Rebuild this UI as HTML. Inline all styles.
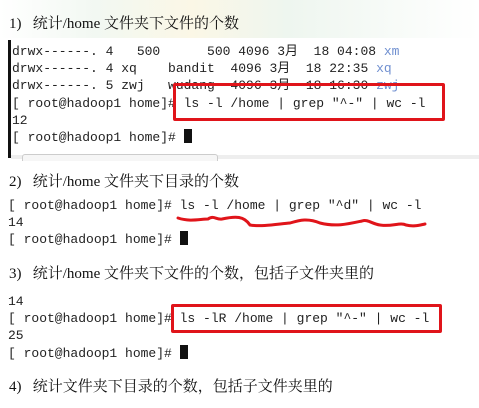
<!DOCTYPE html><html><head><style>
body{margin:0;width:479px;height:408px;background:#fff;position:relative;overflow:hidden}
.h{position:absolute;left:9px;font-family:"Liberation Serif","Noto Serif CJK SC",serif;font-size:15px;color:#111;white-space:pre}
.t{position:absolute;font-family:"Liberation Mono","Noto Sans CJK SC",monospace;font-size:13px;color:#222;white-space:pre;line-height:17.2px}
.c{display:inline-block;width:8px;height:14px;background:#111;vertical-align:-2px}
.b{color:#6f8fd0}
.box{position:absolute;border:3px solid #e0141a;border-radius:2px}
</style></head><body>
<div style="position:absolute;left:0;top:0;width:479px;height:38px;background:linear-gradient(90deg,#fff 0,#f2f8f2 20%,#fbf7e6 40%,#eef6ef 60%,#fff 100%)"></div>
<div class="h" style="top:12px">1)   统计/home 文件夹下文件的个数</div>
<div style="position:absolute;left:8px;top:40px;width:3px;height:118px;background:#111"></div>
<div style="position:absolute;left:11px;top:155px;width:468px;height:4px;background:#eee"></div>
<div style="position:absolute;left:22px;top:154px;width:194px;height:6px;border:1px solid #ccc;border-bottom:none;border-radius:3px 3px 0 0;background:#f6f6f6"></div>
<div class="t" style="left:12px;top:43px">drwx------. 4   500      500 4096 3月  18 04:08 <span class="b">xm</span>
drwx------. 4 xq    bandit  4096 3月  18 22:35 <span class="b">xq</span>
drwx------. 5 zwj   wudang  4096 3月  18 16:30 <span class="b">zwj</span>
[ root@hadoop1 home]# ls -l /home | grep "^-" | wc -l
12
[ root@hadoop1 home]# <span class="c"></span></div>
<div class="box" style="left:173px;top:83px;width:266px;height:32px"></div>
<div class="h" style="top:170px">2)   统计/home 文件夹下目录的个数</div>
<div class="t" style="left:8px;top:197px">[ root@hadoop1 home]# ls -l /home | grep "^d" | wc -l
14
[ root@hadoop1 home]# <span class="c"></span></div>
<svg style="position:absolute;left:0;top:0" width="479" height="408"><path d="M178 218 C190 222,200 219,208 219 C214 215,216 220,222 219 C236 216,244 216,250 225 C262 227,278 224,290 223 C300 220,308 218,320 223 C336 227,348 224,362 221 C368 219,372 224,380 225 C392 227,400 222,406 225 C414 227,420 225,425 224" fill="none" stroke="#e0141a" stroke-width="3" stroke-linecap="round"/></svg>
<div class="h" style="top:262px">3)   统计/home 文件夹下文件的个数，包括子文件夹里的</div>
<div class="t" style="left:8px;top:293px">14
[ root@hadoop1 home]# ls -lR /home | grep "^-" | wc -l
25
[ root@hadoop1 home]# <span class="c"></span></div>
<div class="box" style="left:171px;top:304px;width:265px;height:23px"></div>
<div class="h" style="top:375px">4)   统计文件夹下目录的个数，包括子文件夹里的</div>
</body></html>
